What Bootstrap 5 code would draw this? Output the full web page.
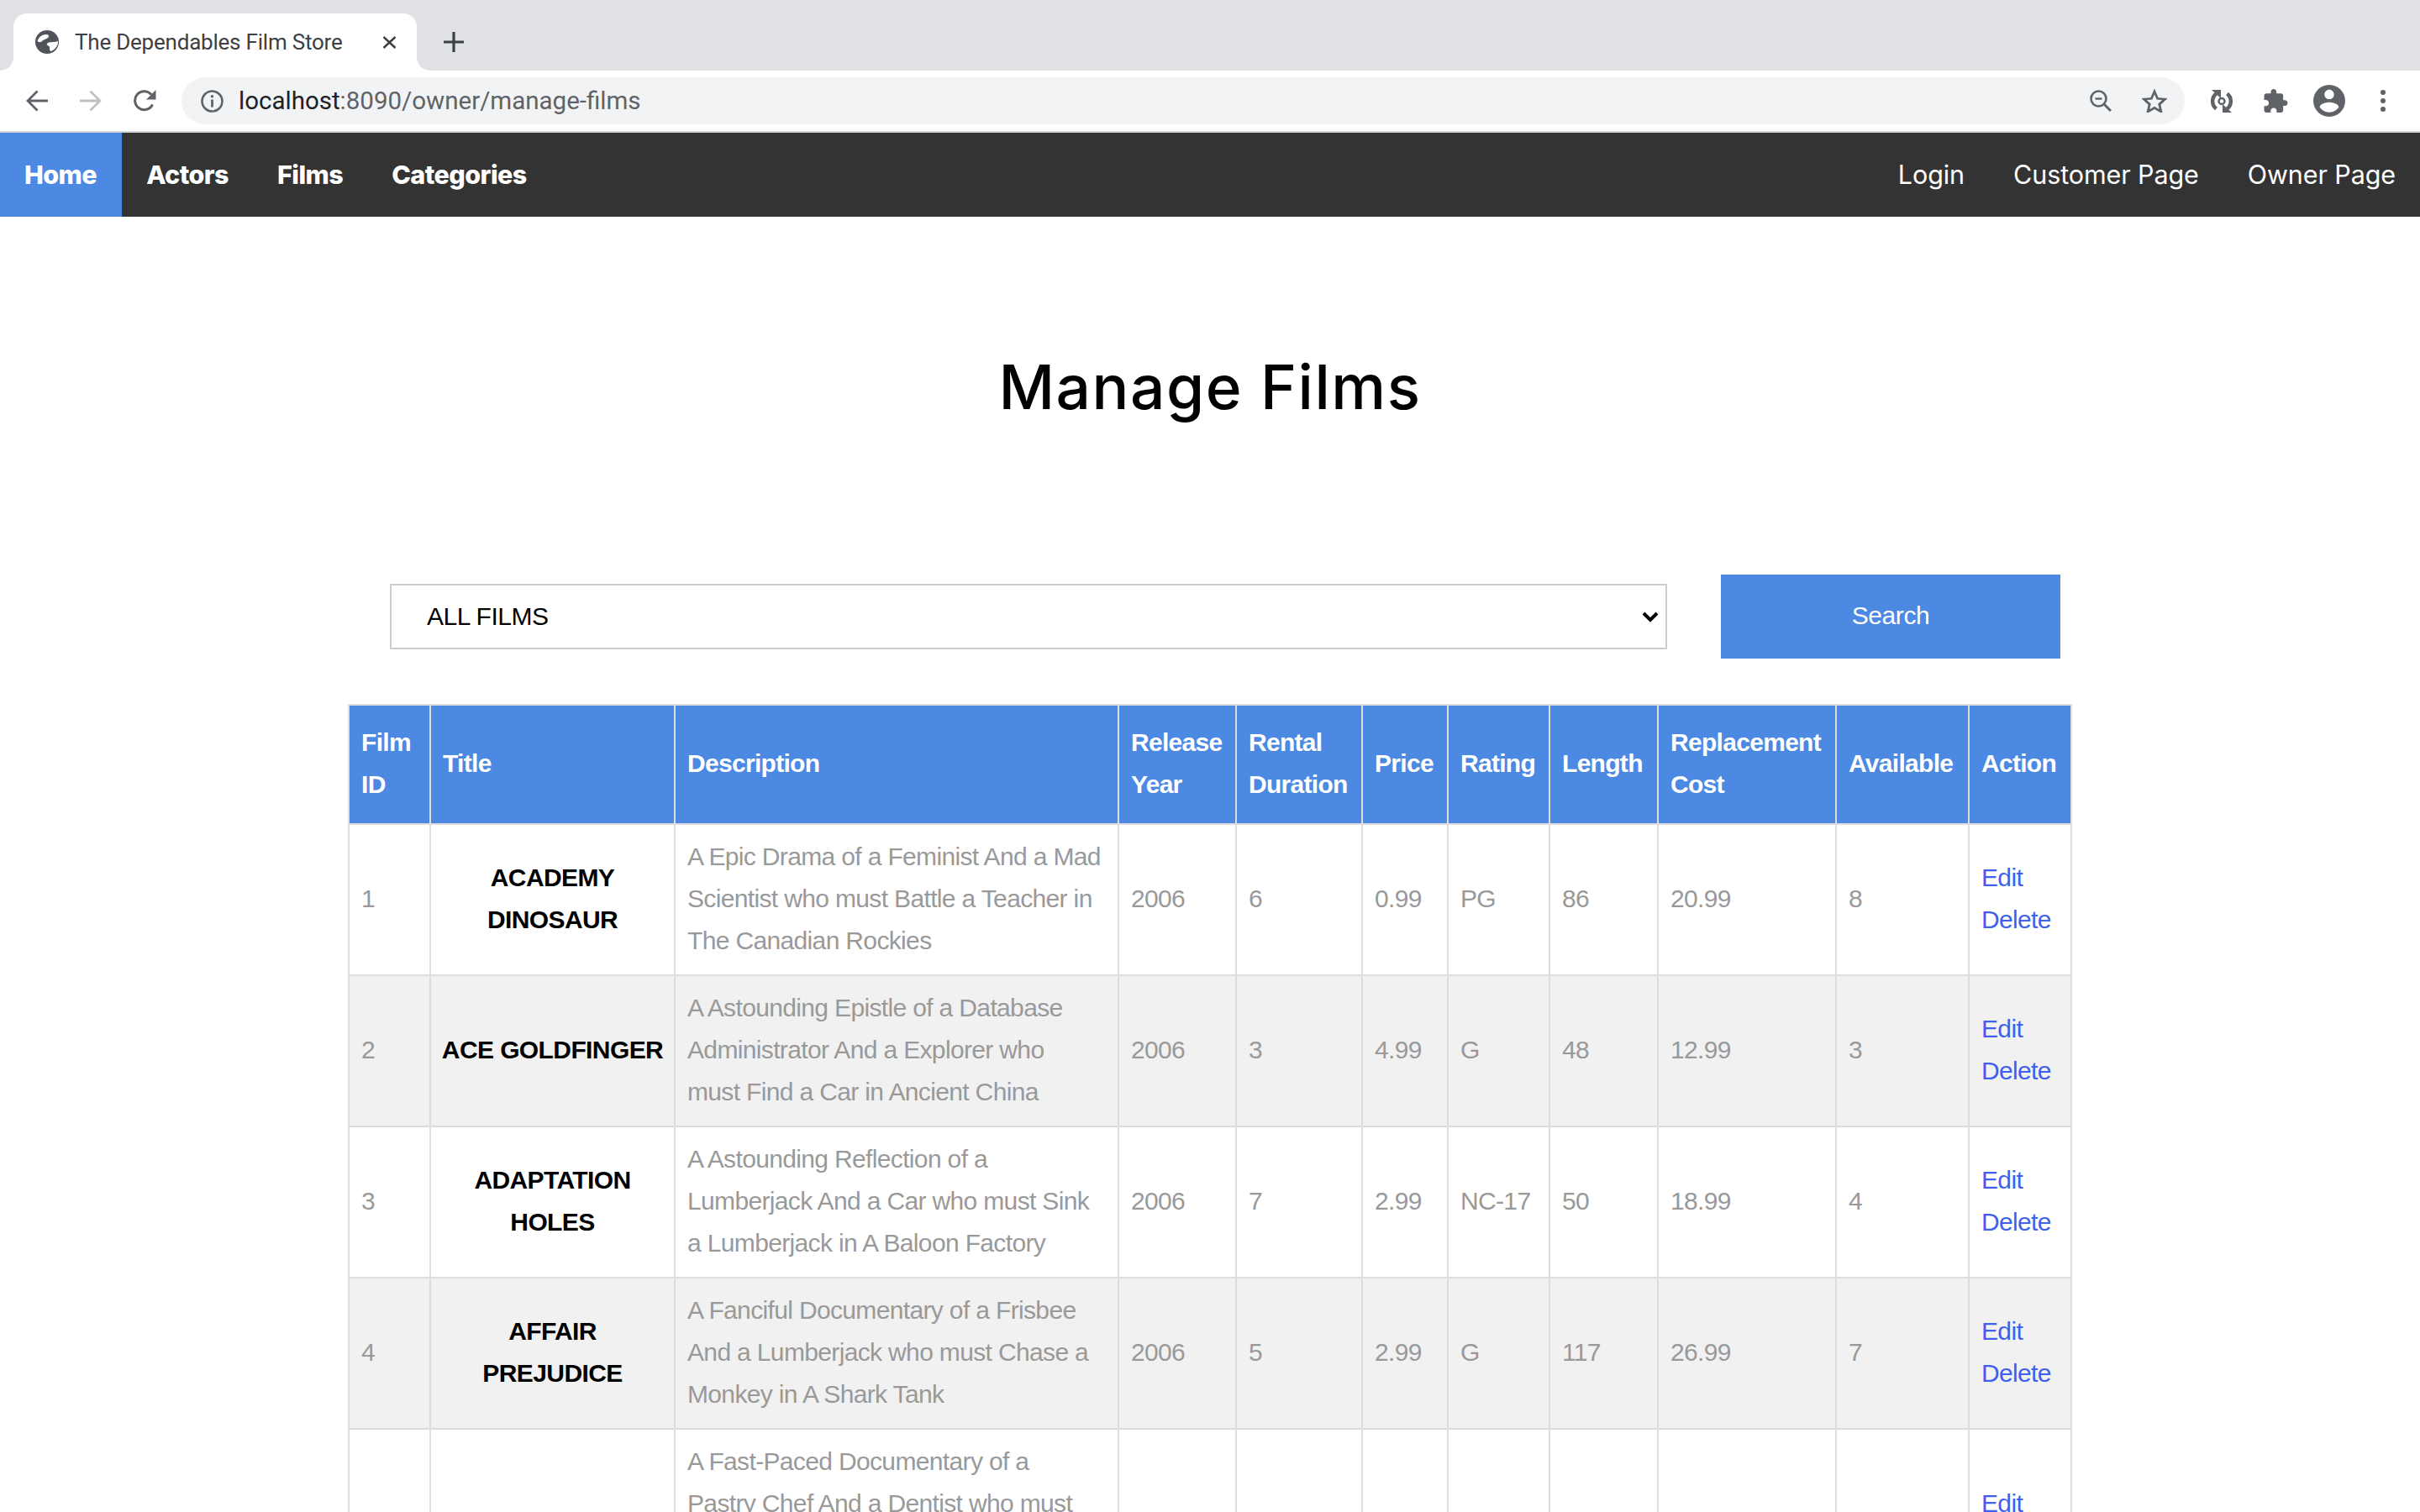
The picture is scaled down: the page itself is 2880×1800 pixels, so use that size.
<!DOCTYPE html>
<html lang="en">
<head>
    <meta charset="utf-8">
    <title>The Dependables Film Store</title>
    <link href="https://cdn.jsdelivr.net/npm/bootstrap@5.3.3/dist/css/bootstrap.min.css" rel="stylesheet"/>
    <style>
        html, body { height: 1800px; overflow: hidden; }
        body { font-family: "Liberation Sans", Arial, sans-serif; background: #fff; color: #000; }

        .tab-strip { height: 84px; background: #dfe1e5; padding: 16px 0 0 16px; }
        .browser-tab { position: relative; width: 480px; height: 68px; background: #fff; border-radius: 16px 16px 0 0; padding: 0 24px 0 26px; font: 26px "Roboto", sans-serif; letter-spacing: -.22px; color: #3c4043; }
        .browser-tab::before, .browser-tab::after { content: ""; position: absolute; bottom: 0; width: 16px; height: 16px; }
        .browser-tab::before { left: -16px; background: radial-gradient(circle at 0 0, #dfe1e5 15.500px, #fff 16.500px); }
        .browser-tab::after { right: -16px; background: radial-gradient(circle at 100% 0, #dfe1e5 15.500px, #fff 16.500px); }
        .tab-globe { margin-right: 19px; }
        .tab-close { margin-top: 1px; }
        .tab-plus { margin: 22px 0 0 32px; }

        .tool-row { height: 74px; border-bottom: 2px solid #d5d6da; }
        .tool-row > svg { flex: none; }
        .back-btn { margin-left: 31px; }
        .fwd-btn { margin-left: 38px; }
        .reload-btn { margin-left: 38px; }
        .url-pill { width: 2384px; height: 56px; margin-left: 30px; background: #f1f3f4; border-radius: 28px; padding: 0 21px 0 23px; font: 29.500px "Roboto", sans-serif; color: #5f6368; }
        .url-host { color: #202124; }
        .url-text { margin-left: 18px; }
        .zoom-btn { margin-right: 36px; }
        .sync-btn { margin-left: 29px; }
        .ext-btn { margin-left: 35px; }
        .avatar-btn { margin-left: 30px; }
        .dots-btn { margin-left: 42px; }

        .top-nav { height: 100px; background: #333; }
        .top-nav a { height: 100px; padding: 0 29px 2px; color: #fff; text-decoration: none; font: 400 30.500px "Inter", sans-serif; letter-spacing: -.1px; display: flex; align-items: center; }
        .top-nav a.strong-link { font-weight: 800; letter-spacing: -.55px; }
        .top-nav a.current { padding-right: 30px; background: #4c89e2; }

        .page-title { font: 500 73px/86px "Inter", sans-serif; text-align: center; letter-spacing: 1.500px; margin: 160px 0 0; }

        .search-row { width: 2052px; margin: 180px auto 0; height: 100px; padding-left: 50px; padding-right: 13px; }
        .film-select.form-select { width: 1520px; height: 78px; border: 2px solid #ccc; border-radius: 0; font: 30px "Liberation Sans", sans-serif; letter-spacing: -.5px; color: #000; padding: 0 32px 1px 42px; background-size: 20px 14px; background-position: right 8px center; background-image: url("data:image/svg+xml,%3csvg xmlns='http://www.w3.org/2000/svg' viewBox='0 0 20 14'%3e%3cpath fill='none' stroke='%23000' stroke-width='4' d='M2 3l8 8 8-8'/%3e%3c/svg%3e"); }
        .search-btn { width: 404px; height: 100px; margin-left: 64px; padding-bottom: 8px; background: #4c89e2; color: #fff; border: 0; border-radius: 0; font: 30px "Liberation Sans", sans-serif; letter-spacing: -.4px; }
        .search-btn:hover { background: #4c89e2; color: #fff; }

        .film-table { width: 2052px; margin: 54px auto 0; border-collapse: collapse; table-layout: fixed; font-size: 30px; line-height: 50px; letter-spacing: -.65px; color: #999; }
        .film-table th, .film-table td { border: 2px solid #ddd; padding: 13px 15px 15px 14px; vertical-align: middle; }
        .film-table th { padding-top: 19px; padding-bottom: 21px; background: #4c89e2; color: #fff; font-weight: 700; letter-spacing: -.7px; }
        .film-table tbody tr:nth-child(even) { background: #f1f1f1; }
        .film-table td.film-name { padding-left: 10px; padding-right: 10px; color: #000; font-weight: 700; text-align: center; letter-spacing: -.6px; }
        .film-table td.film-desc { padding-right: 18px; }
        .film-table a { display: block; color: #3e5ff0; text-decoration: none; }
        .w-id { width: 97px; }
        .w-title { width: 291px; }
        .w-desc { width: 528px; }
        .w-year { width: 140px; }
        .w-dur { width: 150px; }
        .w-price { width: 102px; }
        .w-rate { width: 121px; }
        .w-len { width: 129px; }
        .w-cost { width: 212px; }
        .w-avail { width: 158px; }
        .w-act { width: 122px; }
    </style>
</head>
<body>

<div class="tab-strip d-flex align-items-start">
    <div class="browser-tab d-flex align-items-center">
        <svg class="tab-globe flex-shrink-0" width="28" height="28" viewBox="0 0 28 28">
            <circle cx="14" cy="14" r="14" fill="#50535a"/>
            <path d="M2.500 13C4 8 8 5 13 5c3 0 4 2 2 4-3 2-5 2-7 4-2 2-4 1-5.500 0zM27 13c.5 4-2 9-8 12-2 0-2-3-2-5-1-2-4-2-3-4 2-3 8-1 13-3z" fill="#fff"/>
        </svg>
        <span class="flex-grow-1">The Dependables Film Store</span>
        <svg class="tab-close" width="17" height="15" viewBox="0 0 17 15"><path d="M1.500 1l14 13M15.500 1l-14 13" stroke="#3c4043" stroke-width="2.400"/></svg>
    </div>
    <svg class="tab-plus" width="24" height="24" viewBox="0 0 24 24"><path d="M12 0v24M0 12h24" stroke="#3c4043" stroke-width="3.200"/></svg>
</div>

<div class="tool-row d-flex align-items-center">
    <svg class="back-btn" width="26" height="26" viewBox="0 0 26 26" fill="none"><path d="M26 13H3M13.500 1.500L2 13l11.500 11.500" stroke="#5f6368" stroke-width="2.800"/></svg>
    <svg class="fwd-btn" width="26" height="26" viewBox="0 0 26 26" fill="none"><path d="M0 13h23M12.500 1.500L24 13 12.500 24.500" stroke="#bdc1c6" stroke-width="2.800"/></svg>
    <svg class="reload-btn" width="27" height="26" viewBox="0 0 27 26" fill="none"><path d="M22.500 17.500A11 11 0 1 1 21 5.500" stroke="#5f6368" stroke-width="3"/><path d="M26.500 0v11.500H15z" fill="#5f6368"/></svg>
    <div class="url-pill d-flex align-items-center">
        <svg width="27" height="27" viewBox="0 0 27 27" fill="none" class="flex-shrink-0"><circle cx="13.500" cy="13.500" r="12" stroke="#5f6368" stroke-width="2.600"/><path d="M13.500 11.500v9" stroke="#5f6368" stroke-width="2.800"/><circle cx="13.500" cy="7.800" r="1.700" fill="#5f6368"/></svg>
        <span class="url-text flex-grow-1"><span class="url-host">localhost</span>:8090/owner/manage-films</span>
        <svg class="zoom-btn" width="26" height="26" viewBox="0 0 26 26" fill="none"><circle cx="10.500" cy="10.500" r="9" stroke="#5f6368" stroke-width="2.600"/><path d="M6.500 10.500h8" stroke="#5f6368" stroke-width="2.400"/><path d="M17 17l8 8" stroke="#5f6368" stroke-width="3"/></svg>
        <svg width="30" height="28" viewBox="0 0 30 28" fill="none"><path d="M15 3l3.600 8.300 9 .8-6.800 6 2 8.800L15 22.300 7.200 26.900l2-8.800-6.800-6 9-.8z" stroke="#5f6368" stroke-width="2.800"/></svg>
    </div>
    <svg class="sync-btn" width="30" height="29" viewBox="0 0 30 29" fill="none"><path d="M8.500 5.500A11.500 11.500 0 0 0 8.500 23.500M21.500 23.500A11.500 11.500 0 0 0 21.500 5.500" stroke="#5f6368" stroke-width="4.500"/><path d="M3 1h11v10zM27 28H16V18z" fill="#5f6368"/><circle cx="15" cy="14.500" r="3.500" stroke="#5f6368" stroke-width="2.500"/></svg>
    <svg class="ext-btn" width="29" height="28" viewBox="2 1 21 21"><path d="M20.500 11H19V7c0-1.100-.9-2-2-2h-4V3.500C13 2.120 11.880 1 10.500 1S8 2.120 8 3.500V5H4c-1.100 0-1.990.9-1.990 2v3.800H3.500c1.490 0 2.700 1.210 2.700 2.700s-1.210 2.700-2.700 2.700H2V20c0 1.100.9 2 2 2h3.800v-1.500c0-1.490 1.210-2.700 2.700-2.700 1.490 0 2.700 1.210 2.700 2.700V22H17c1.100 0 2-.9 2-2v-4h1.500c1.380 0 2.500-1.120 2.500-2.500S21.880 11 20.500 11z" fill="#5f6368"/></svg>
    <svg class="avatar-btn" width="38" height="38" viewBox="2 2 20 20"><path d="M12 2C6.480 2 2 6.480 2 12s4.480 10 10 10 10-4.480 10-10S17.520 2 12 2zm0 3c1.660 0 3 1.340 3 3s-1.340 3-3 3-3-1.340-3-3 1.340-3 3-3zm0 14.200c-2.500 0-4.710-1.280-6-3.220.03-1.990 4-3.080 6-3.080 1.990 0 5.970 1.090 6 3.080-1.290 1.940-3.500 3.220-6 3.220z" fill="#5f6368"/></svg>
    <svg class="dots-btn" width="6" height="26" viewBox="0 0 6 26"><circle cx="3" cy="3" r="3" fill="#5f6368"/><circle cx="3" cy="13" r="3" fill="#5f6368"/><circle cx="3" cy="23" r="3" fill="#5f6368"/></svg>
</div>

<nav class="top-nav d-flex">
    <a class="strong-link current" href="#">Home</a>
    <a class="strong-link" href="#">Actors</a>
    <a class="strong-link" href="#">Films</a>
    <a class="strong-link" href="#">Categories</a>
    <a class="ms-auto" href="#">Login</a>
    <a href="#">Customer Page</a>
    <a href="#">Owner Page</a>
</nav>

<h1 class="page-title">Manage Films</h1>

<div class="search-row d-flex align-items-center">
    <select class="form-select film-select">
        <option>ALL FILMS</option>
    </select>
    <button class="btn search-btn" type="button">Search</button>
</div>

<table class="film-table">
    <colgroup>
        <col class="w-id"><col class="w-title"><col class="w-desc"><col class="w-year"><col class="w-dur"><col class="w-price"><col class="w-rate"><col class="w-len"><col class="w-cost"><col class="w-avail"><col class="w-act">
    </colgroup>
    <thead>
        <tr><th>Film ID</th><th>Title</th><th>Description</th><th>Release Year</th><th>Rental Duration</th><th>Price</th><th>Rating</th><th>Length</th><th>Replacement Cost</th><th>Available</th><th>Action</th></tr>
    </thead>
    <tbody>
        <tr><td>1</td><td class="film-name">ACADEMY DINOSAUR</td><td class="film-desc">A Epic Drama of a Feminist And a Mad Scientist who must Battle a Teacher in The Canadian Rockies</td><td>2006</td><td>6</td><td>0.99</td><td>PG</td><td>86</td><td>20.99</td><td>8</td><td><a href="#">Edit</a><a href="#">Delete</a></td></tr>
        <tr><td>2</td><td class="film-name">ACE GOLDFINGER</td><td class="film-desc">A Astounding Epistle of a Database Administrator And a Explorer who must Find a Car in Ancient China</td><td>2006</td><td>3</td><td>4.99</td><td>G</td><td>48</td><td>12.99</td><td>3</td><td><a href="#">Edit</a><a href="#">Delete</a></td></tr>
        <tr><td>3</td><td class="film-name">ADAPTATION HOLES</td><td class="film-desc">A Astounding Reflection of a Lumberjack And a Car who must Sink a Lumberjack in A Baloon Factory</td><td>2006</td><td>7</td><td>2.99</td><td>NC-17</td><td>50</td><td>18.99</td><td>4</td><td><a href="#">Edit</a><a href="#">Delete</a></td></tr>
        <tr><td>4</td><td class="film-name">AFFAIR PREJUDICE</td><td class="film-desc">A Fanciful Documentary of a Frisbee And a Lumberjack who must Chase a Monkey in A Shark Tank</td><td>2006</td><td>5</td><td>2.99</td><td>G</td><td>117</td><td>26.99</td><td>7</td><td><a href="#">Edit</a><a href="#">Delete</a></td></tr>
        <tr><td>5</td><td class="film-name">AFRICAN EGG</td><td class="film-desc">A Fast-Paced Documentary of a Pastry Chef And a Dentist who must Pursue a Forensic Psychologist in The Gulf of Mexico</td><td>2006</td><td>6</td><td>2.99</td><td>G</td><td>130</td><td>22.99</td><td>3</td><td><a href="#">Edit</a><a href="#">Delete</a></td></tr>
    </tbody>
</table>

<script src="https://cdn.jsdelivr.net/npm/bootstrap@5.3.3/dist/js/bootstrap.bundle.min.js"></script>
</body>
</html>
